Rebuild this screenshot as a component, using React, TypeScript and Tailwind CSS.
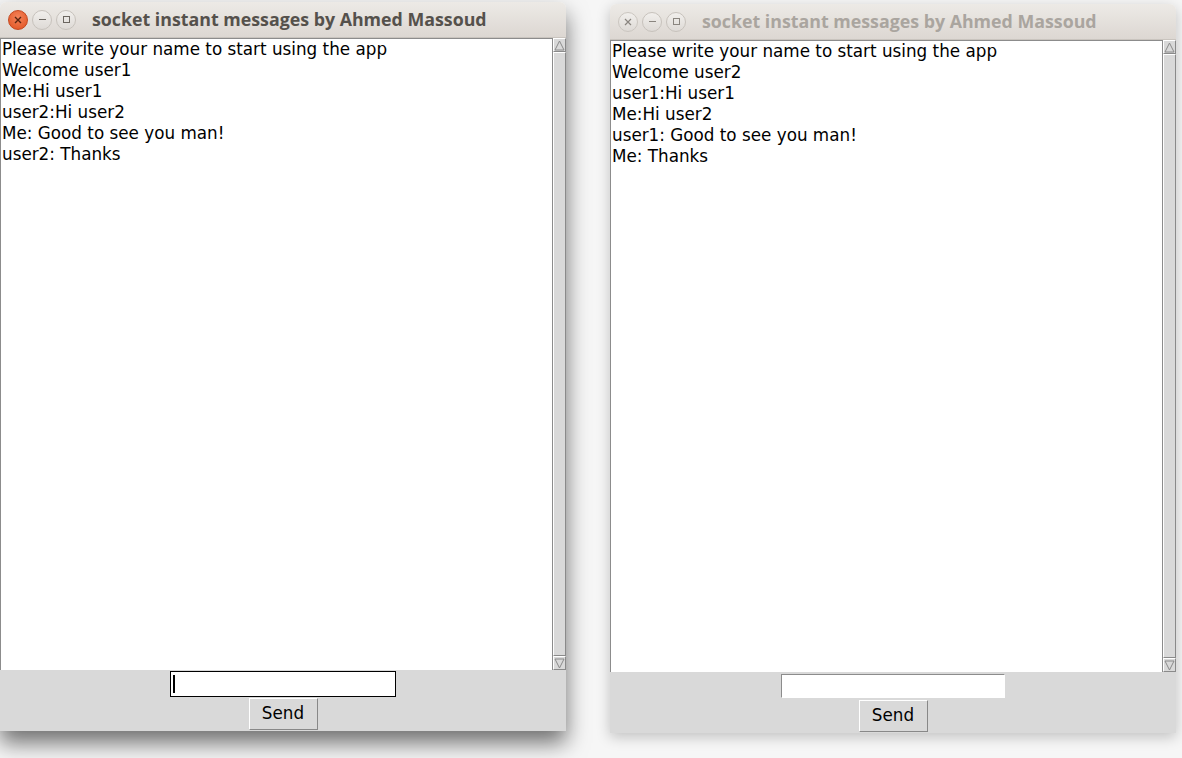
import React from 'react';

type ChatWindowProps = {
  active: boolean;
  lines: string[];
};

function TitleButtons({ active }: { active: boolean }) {
  const iconColor = active ? '#6b6660' : '#8a857f';
  return (
    <div className="flex items-center gap-[4px]">
      {active ? (
        <div className="w-[20px] h-[20px] rounded-full bg-[radial-gradient(circle_at_50%_35%,#f4845a,#e0501f)] border border-[#c4481f] flex items-center justify-center">
          <svg width="8" height="8" viewBox="0 0 8 8">
            <path d="M1 1 L7 7 M7 1 L1 7" stroke="#5a2410" strokeWidth="1.4" />
          </svg>
        </div>
      ) : (
        <div className="w-[20px] h-[20px] rounded-full bg-[linear-gradient(#f1efec,#dedad6)] border border-[#cbc6c0] flex items-center justify-center">
          <svg width="8" height="8" viewBox="0 0 8 8">
            <path d="M1 1 L7 7 M7 1 L1 7" stroke={iconColor} strokeWidth="1.2" />
          </svg>
        </div>
      )}
      <div className="w-[20px] h-[20px] rounded-full bg-[linear-gradient(#f1efec,#dedad6)] border border-[#c7c2bc] flex items-center justify-center">
        <svg width="9" height="9" viewBox="0 0 9 9">
          <path d="M1 4.5 H8" stroke={iconColor} strokeWidth="1.2" />
        </svg>
      </div>
      <div className="w-[20px] h-[20px] rounded-full bg-[linear-gradient(#f1efec,#dedad6)] border border-[#c7c2bc] flex items-center justify-center">
        <svg width="9" height="9" viewBox="0 0 9 9">
          <rect x="1.5" y="1.5" width="6" height="6" fill="none" stroke={iconColor} strokeWidth="1" />
        </svg>
      </div>
    </div>
  );
}

function Arrow({ up }: { up: boolean }) {
  return (
    <div className="h-[14px] w-[13px] bg-[#d9d9d9] border-t border-l border-white border-b border-r border-b-[#8a8a8a] border-r-[#8a8a8a] flex items-center justify-center">
      <svg width="11" height="11" viewBox="0 0 11 11">
        {up ? (
          <path d="M5.5 1 L10 10 L1 10 Z" fill="#d9d9d9" stroke="#8a8a8a" strokeWidth="1" />
        ) : (
          <path d="M1 1 L10 1 L5.5 10 Z" fill="#d9d9d9" stroke="#8a8a8a" strokeWidth="1" />
        )}
      </svg>
    </div>
  );
}

function ChatWindow({ active, lines }: ChatWindowProps) {
  return (
    <div
      className={`w-[566px] flex flex-col rounded-t-[6px] overflow-hidden ${
        active ? 'shadow-[0_12px_22px_rgba(0,0,0,0.55)]' : 'shadow-[0_4px_14px_rgba(0,0,0,0.22)]'
      }`}
    >
      {/* title bar */}
      <div className="h-[36px] shrink-0 flex items-center pl-[8px] bg-[linear-gradient(#edeae6,#dcd7d2)] border-b border-[#c9c4be]">
        <TitleButtons active={active} />
        <span
          className={`ml-[16px] text-[17.8px] font-bold ${active ? 'text-[#55514c]' : 'text-[#aaa59f]'}`}
          style={{ fontFamily: '"Open Sans", "DejaVu Sans", sans-serif' }}
        >
          socket instant messages by Ahmed Massoud
        </span>
      </div>

      {/* text area + scrollbar */}
      <div className="h-[632px] flex bg-[#d9d9d9]">
        <div
          className="flex-1 bg-white border-l border-t border-[#8c8c8c] pl-[1px] text-[16.8px] leading-[21px] text-black"
          style={{ fontFamily: '"DejaVu Sans", sans-serif' }}
        >
          {lines.map((l, i) => (
            <div key={i} className="whitespace-pre">
              {l}
            </div>
          ))}
        </div>
        <div className="w-[14px] flex flex-col border-l border-[#8c8c8c] bg-[#c3c3c3]">
          <Arrow up />
          <div className="flex-1 bg-[#d9d9d9] border-t border-l border-white border-b border-r border-b-[#8a8a8a] border-r-[#8a8a8a]" />
          <Arrow up={false} />
        </div>
      </div>

      {/* entry + send */}
      <div className="h-[61px] bg-[#d9d9d9] flex flex-col items-center pt-[1px]">
        {active ? (
          <div className="w-[226px] h-[26px] bg-white border border-black flex items-center pl-[2px]">
            <div className="w-[2px] h-[18px] bg-black" />
          </div>
        ) : (
          <div className="w-[224px] h-[24px] mt-[1px] bg-white border-t border-l border-[#8c8c8c] border-b border-r border-b-white border-r-white" />
        )}
        <button
          className={`${active ? 'mt-[1px]' : 'mt-[2px]'} w-[69px] h-[32px] bg-[#d9d9d9] border-t border-l border-white border-b border-r border-b-[#888] border-r-[#888] text-[16.8px] text-black`}
          style={{ fontFamily: '"DejaVu Sans", sans-serif' }}
        >
          Send
        </button>
      </div>
    </div>
  );
}

export default function App() {
  return (
    <div className="w-[1182px] h-[758px] bg-[#f6f6f6] overflow-hidden flex items-start">
      <div className="mt-[2px]">
        <ChatWindow
          active
          lines={[
            'Please write your name to start using the app',
            'Welcome user1',
            'Me:Hi user1',
            'user2:Hi user2',
            'Me: Good to see you man!',
            'user2: Thanks',
          ]}
        />
      </div>
      <div className="mt-[4px] ml-[44px]">
        <ChatWindow
          active={false}
          lines={[
            'Please write your name to start using the app',
            'Welcome user2',
            'user1:Hi user1',
            'Me:Hi user2',
            'user1: Good to see you man!',
            'Me: Thanks',
          ]}
        />
      </div>
    </div>
  );
}
